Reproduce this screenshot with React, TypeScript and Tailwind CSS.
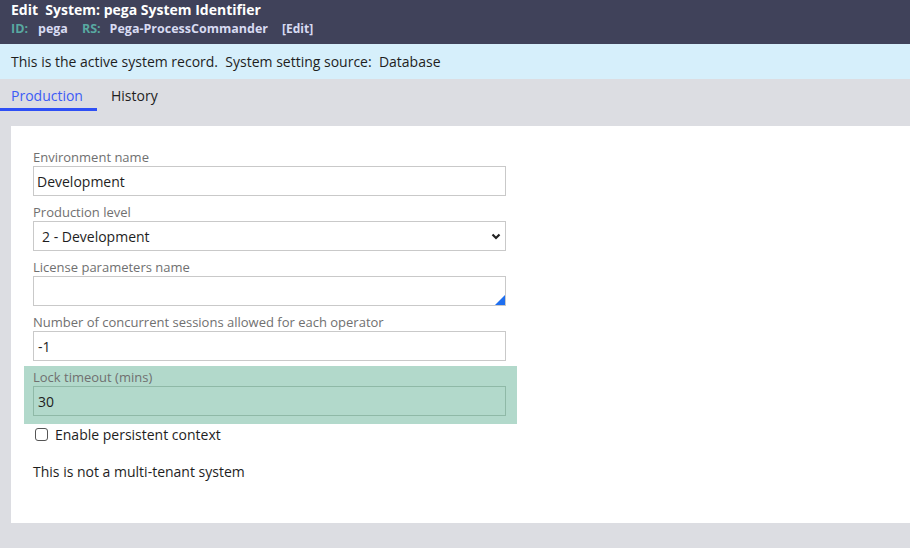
import React from 'react';

const font = { fontFamily: '"Open Sans", "Liberation Sans", sans-serif' };

const Label: React.FC<{ children: React.ReactNode }> = ({ children }) => (
  <div className="h-[18px] text-[13px] leading-[18px] text-[#707070]">{children}</div>
);

const App: React.FC = () => {
  return (
    <div className="w-[910px] h-[548px] overflow-hidden bg-[#dcdde2]" style={font}>
      {/* Header */}
      <div className="h-[44px] bg-[#40425a] px-[11px] pt-[1px]">
        <div className="text-[14px] leading-[18px] font-bold text-white">Edit&nbsp; System: pega System Identifier</div>
        <div className="flex items-center text-[12.5px] leading-[18px] font-bold mt-[1px]">
          <span className="text-[#58a9a1]">ID:</span>
          <span className="ml-[10px] text-[#d8dbf2]">pega</span>
          <span className="ml-[14px] text-[#58a9a1]">RS:</span>
          <span className="ml-[9px] text-[#d8dbf2]">Pega-ProcessCommander</span>
          <span className="ml-[14px] text-[12px] text-[#d8dbf2]">[Edit]</span>
        </div>
      </div>

      {/* Info bar */}
      <div className="h-[35px] bg-[#d6effb] px-[11px] flex items-center text-[14px] text-[#1e1e1e] whitespace-pre">
        This is the active system record.  System setting source:  Database
      </div>

      {/* Tabs */}
      <div className="flex h-[32px] text-[14px]">
        <div className="w-[97px] pl-[11px] pt-[6px] border-b-[3px] border-[#2e4ff5] text-[#3c5cf6]">Production</div>
        <div className="pl-[14px] pt-[6px] text-[#1e1e1e]">History</div>
      </div>

      {/* Panel */}
      <div className="ml-[11px] mt-[15px] h-[397px] bg-white pl-[22px] pt-[22px]">
        <div className="w-[473px] flex flex-col">
          <Label>Environment name</Label>
          <input
            readOnly
            value="Development"
            className="h-[30px] border border-[#c9c9c9] px-[3px] text-[14px] text-[#1e1e1e] outline-none"
            style={font}
          />

          <div className="mt-[7px]">
            <Label>Production level</Label>
          </div>
          <div className="relative h-[30px] border border-[#c9c9c9] flex items-center pl-[8px] text-[14px] text-[#1e1e1e]">
            2 - Development
            <svg className="absolute right-[4px] top-[11px]" width="10" height="7" viewBox="0 0 10 7">
              <path d="M1.5 1.5 L5 5 L8.5 1.5" fill="none" stroke="#222" strokeWidth="2.2" />
            </svg>
          </div>

          <div className="mt-[7px]">
            <Label>License parameters name</Label>
          </div>
          <div className="relative h-[30px] border border-[#c9c9c9]">
            <svg className="absolute right-0 bottom-0" width="10" height="10" viewBox="0 0 10 10">
              <path d="M10 0 L10 10 L0 10 Z" fill="#1e6ff0" />
            </svg>
          </div>

          <div className="mt-[7px]">
            <Label>Number of concurrent sessions allowed for each operator</Label>
          </div>
          <div className="h-[30px] border border-[#c9c9c9] flex items-center px-[4px] text-[14px] text-[#1e1e1e]">-1</div>

          <div className="mt-[5px] -ml-[9px] w-[493px] bg-[#b2d9cb] pl-[9px] pr-[11px] pt-[2px] pb-[8px]">
            <Label>Lock timeout (mins)</Label>
            <div className="h-[30px] border border-[#8fb9a7] flex items-center px-[4px] text-[14px] text-[#1e1e1e]">30</div>
          </div>

          <label className="mt-[1px] h-[18px] flex items-center text-[14px] text-[#1e1e1e]">
            <span className="ml-[2px] w-[13px] h-[13px] rounded-[3px] border border-[#555] bg-white" />
            <span className="ml-[7px]">Enable persistent context</span>
          </label>

          <div className="mt-[19px] h-[20px] leading-[20px] text-[14px] text-[#1e1e1e]">This is not a multi-tenant system</div>
        </div>
      </div>
    </div>
  );
};

export default App;
